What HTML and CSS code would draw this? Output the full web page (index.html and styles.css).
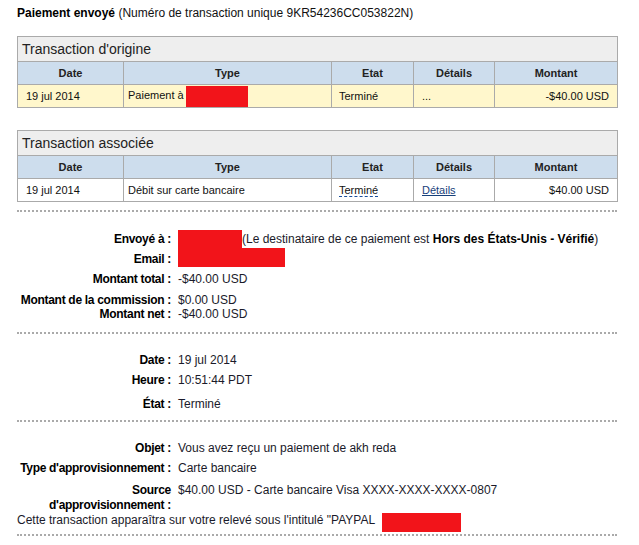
FILE: index.html
```html
<!DOCTYPE html>
<html lang="fr">
<head>
  <meta charset="UTF-8" />
  <title>Détails de la transaction</title>
  <link rel="stylesheet" href="styles.css">
</head>
<body>
  <div class="page">
    <p class="heading"><b>Paiement envoyé</b> (Numéro de transaction unique 9KR54236CC053822N)</p>

    <table class="txn">
      <colgroup>
        <col class="c-date"><col class="c-type"><col class="c-etat"><col class="c-det"><col class="c-amt">
      </colgroup>
      <tr><th class="caption" colspan="5">Transaction d'origine</th></tr>
      <tr class="cols">
        <th>Date</th>
        <th>Type</th>
        <th>Etat</th>
        <th>Détails</th>
        <th>Montant</th>
      </tr>
      <tr class="hilite">
        <td class="first">19 jul 2014</td>
        <td class="type">Paiement à <span class="mask mask-cell"></span></td>
        <td>Terminé</td>
        <td class="more">...</td>
        <td class="amt">-$40.00 USD</td>
      </tr>
    </table>

    <table class="txn second">
      <colgroup>
        <col class="c-date"><col class="c-type"><col class="c-etat"><col class="c-det"><col class="c-amt">
      </colgroup>
      <tr><th class="caption" colspan="5">Transaction associée</th></tr>
      <tr class="cols">
        <th>Date</th>
        <th>Type</th>
        <th>Etat</th>
        <th>Détails</th>
        <th>Montant</th>
      </tr>
      <tr>
        <td class="first">19 jul 2014</td>
        <td class="type">Débit sur carte bancaire</td>
        <td><span class="abbr">Terminé</span></td>
        <td class="more"><a href="#">Détails</a></td>
        <td class="amt">$40.00 USD</td>
      </tr>
    </table>

    <div class="section first-sec">
      <div class="row">
        <span class="label">Envoyé à :</span>
        <span class="value"><span class="mask mask-name"></span>(Le destinataire de ce paiement est <b>Hors des États-Unis - Vérifié</b>)</span>
      </div>
      <div class="row">
        <span class="label">Email :</span>
        <span class="value"><span class="mask mask-mail"></span></span>
      </div>
      <div class="row">
        <span class="label">Montant total :</span>
        <span class="value">-$40.00 USD</span>
      </div>
      <div class="row fee">
        <span class="label">Montant de la commission :</span>
        <span class="value">$0.00 USD</span>
      </div>
      <div class="row net">
        <span class="label">Montant net :</span>
        <span class="value">-$40.00 USD</span>
      </div>
    </div>

    <div class="section date-sec">
      <div class="row">
        <span class="label">Date :</span>
        <span class="value">19 jul 2014</span>
      </div>
      <div class="row">
        <span class="label">Heure :</span>
        <span class="value">10:51:44 PDT</span>
      </div>
      <div class="row wide">
        <span class="label">État :</span>
        <span class="value">Terminé</span>
      </div>
    </div>

    <div class="section last-sec">
      <div class="row">
        <span class="label">Objet :</span>
        <span class="value">Vous avez reçu un paiement de akh reda</span>
      </div>
      <div class="row">
        <span class="label">Type d'approvisionnement :</span>
        <span class="value">Carte bancaire</span>
      </div>
      <div class="row src">
        <span class="label">Source<br>d'approvisionnement :</span>
        <span class="value">$40.00 USD - Carte bancaire Visa XXXX-XXXX-XXXX-0807</span>
      </div>
      <p class="note">Cette transaction apparaîtra sur votre relevé sous l'intitulé "PAYPAL <span class="mask mask-note"></span></p>
    </div>
    <div class="section end"></div>
  </div>
</body>
</html>
```

FILE: styles.css
```css
html, body {
  margin: 0;
  padding: 0;
  background: #fff;
  color: #111;
  font-family: "Liberation Sans", Arial, sans-serif;
  font-size: 12px;
}
.page {
  width: 600px;
  padding: 6px 0 0 17px;
}
.heading {
  margin: 0;
  line-height: 14px;
}
.heading b {
  color: #000;
}

/* transaction tables */
.txn {
  width: 600px;
  margin-top: 16px;
  border-collapse: collapse;
  table-layout: fixed;
  border: 1px solid #aaa;
  font-size: 11px;
}
.txn.second {
  margin-top: 22px;
}
.c-date { width: 106px; }
.c-type { width: 208px; }
.c-etat { width: 82px; }
.c-det { width: 81px; }
.c-amt { width: 123px; }
.txn th,
.txn td {
  border: 1px solid #aaa;
  padding: 0 7px;
  height: 22px;
  white-space: nowrap;
}
.txn th.caption {
  background: #eee;
  color: #222;
  font-size: 14px;
  font-weight: normal;
  text-align: left;
  padding: 0 4px;
  height: 24px;
}
.cols th {
  background: #cddded;
  color: #222;
  font-weight: bold;
  text-align: center;
}
.hilite td {
  background: #fff7cc;
}
.txn td.first {
  padding-left: 8px;
}
.txn td.type {
  padding-left: 4px;
}
.txn td.more {
  padding-left: 8px;
}
.txn td.amt {
  text-align: right;
  padding-right: 8px;
}
.abbr {
  border-bottom: 1px dashed #1a4f9c;
}
.txn a {
  color: #17407a;
}

/* redacted values */
.mask {
  display: inline-block;
  background: #f2141a;
}
.mask-cell {
  width: 62px;
  height: 21px;
  vertical-align: middle;
  margin-left: -1px;
}
.mask-name {
  width: 64px;
  height: 14px;
  vertical-align: top;
  box-shadow: 0 -2px 0 #f2141a, 0 2px 0 #f2141a;
}
.mask-mail {
  width: 107px;
  height: 14px;
  vertical-align: top;
  box-shadow: 0 -4px 0 #f2141a, 0 1px 0 #f2141a;
}
.mask-note {
  width: 79px;
  height: 15px;
  margin-left: 4px;
  vertical-align: top;
  box-shadow: 0 4px 0 #f2141a;
}

/* detail sections */
.section {
  border-top: 2px dotted #aaa;
  margin-top: 8px;
  padding-top: 17px;
}
.date-sec {
  padding-top: 16px;
}
.last-sec {
  margin-top: 6px;
  padding-top: 16px;
}
.end {
  margin-top: 6px;
  padding: 0;
}
.row {
  display: flex;
  gap: 7px;
  line-height: 14px;
  padding: 3px 0;
}
.row.fee {
  padding-top: 4px;
  padding-bottom: 0;
}
.row.net {
  padding-top: 0;
}
.row.wide {
  padding-top: 7px;
}
.label {
  width: 154px;
  flex: none;
  text-align: right;
  font-weight: bold;
  letter-spacing: -0.3px;
  white-space: nowrap;
  color: #000;
}
.value {
  color: #1a1a2a;
  white-space: nowrap;
}
.value b {
  color: #000;
}
.row.src {
  line-height: 15px;
  padding-top: 5px;
  padding-bottom: 0;
}
.note {
  margin: 0;
  line-height: 15px;
  color: #1a1a2a;
}
```
